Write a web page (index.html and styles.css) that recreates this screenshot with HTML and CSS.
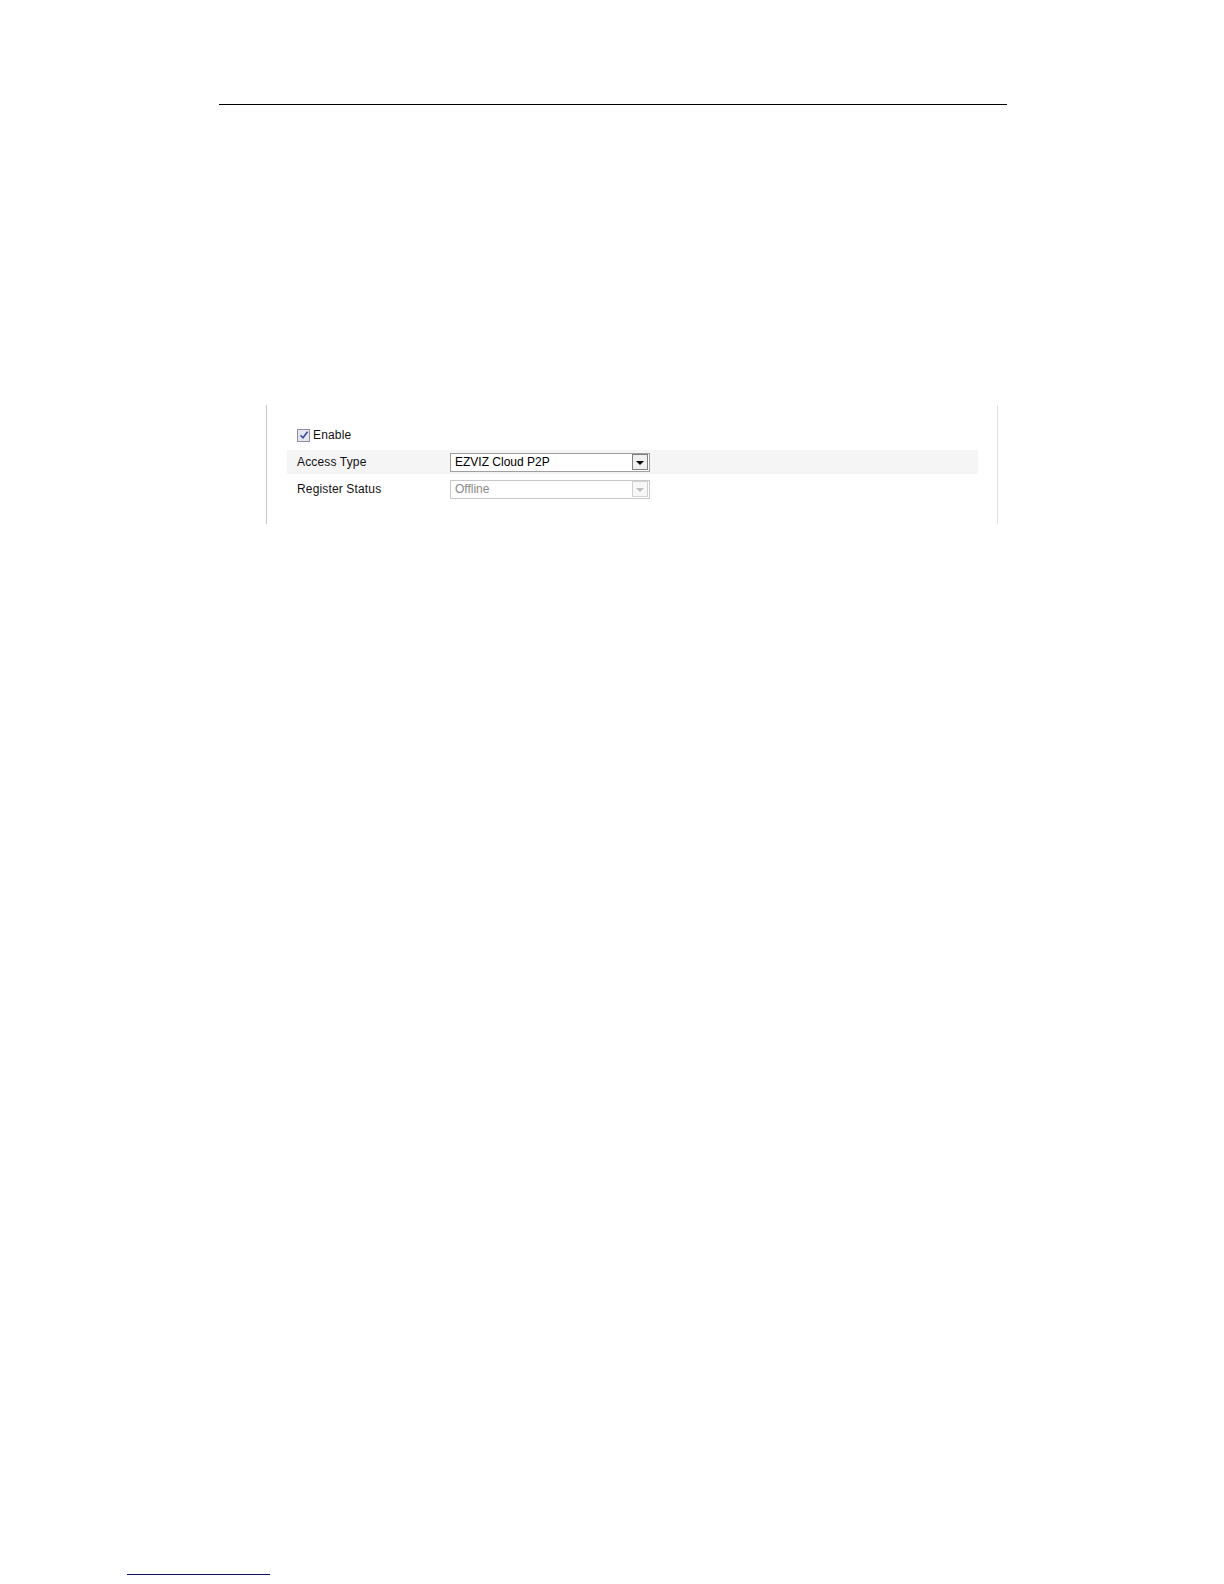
FILE: index.html
```html
<!DOCTYPE html>
<html>
<head>
<meta charset="utf-8">
<link rel="stylesheet" href="styles.css">
</head>
<body>
<div class="page">
  <div class="header-rule"></div>
  <div class="panel">
    <div class="row row-enable">
      <span class="checkbox">
        <svg width="10" height="10" viewBox="0 0 10 10"><path d="M1.5 5.2 L4 7.8 L8.6 1.8" fill="none" stroke="#3c46a8" stroke-width="1.6"/></svg>
      </span>
      <span class="label-inline">Enable</span>
    </div>
    <div class="row row-shaded">
      <span class="label">Access Type</span>
      <span class="select">
        <span class="select-text">EZVIZ Cloud P2P</span>
        <span class="select-btn"><span class="tri"></span></span>
      </span>
    </div>
    <div class="row">
      <span class="label">Register Status</span>
      <span class="select disabled">
        <span class="select-text">Offline</span>
        <span class="select-btn"><span class="tri"></span></span>
      </span>
    </div>
  </div>
  <div class="footer-rule"></div>
</div>
</body>
</html>
```
FILE: styles.css
```css
html, body {
  margin: 0;
  padding: 0;
  background: #ffffff;
}
.page {
  height: 1584px;
  display: flex;
  flex-direction: column;
  font-family: "Liberation Sans", Arial, sans-serif;
  font-size: 12px;
  color: #111;
}
.header-rule {
  margin-top: 104px;
  margin-left: 219px;
  width: 788px;
  height: 0;
  border-top: 1.5px solid #000;
}
.panel {
  margin-top: 300px;
  margin-left: 266px;
  width: 732px;
  height: 119px;
  border-left: 1px solid #c4c4c4;
  border-right: 1px solid #e2e2e2;
  padding: 18px 19px 0 20px;
  box-sizing: border-box;
}
.row {
  display: flex;
  align-items: center;
  height: 24px;
  padding-left: 10px;
  margin-bottom: 3px;
}
.row-enable {
  margin-bottom: 3px;
}
.row-shaded {
  background: #f5f5f5;
}
.label {
  width: 153px;
  letter-spacing: 0.15px;
}
.checkbox {
  width: 11px;
  height: 11px;
  border: 1px solid #8f8f9f;
  background: #e4e6ef;
  display: flex;
  align-items: center;
  justify-content: center;
  margin-right: 3px;
}
.label-inline {
  line-height: 14px;
  letter-spacing: 0.15px;
}
.select {
  width: 200px;
  height: 19px;
  box-sizing: border-box;
  border: 1px solid #a0a0a0;
  background: #fff;
  display: flex;
  align-items: center;
  justify-content: space-between;
  padding-left: 4px;
  padding-right: 1px;
}
.select-text {
  color: #000;
}
.select-btn {
  width: 14px;
  height: 14px;
  border: 1px solid #808080;
  background: #f0f0f0;
  display: flex;
  align-items: center;
  justify-content: center;
}
.tri {
  width: 0;
  height: 0;
  border-left: 4px solid transparent;
  border-right: 4px solid transparent;
  border-top: 4px solid #000;
  margin-top: 2px;
}
.select.disabled {
  border-color: #c8c8c8;
}
.select.disabled .select-text {
  color: #8a8a8a;
}
.select.disabled .select-btn {
  border-color: #d0d0d0;
  background: #f7f7f7;
}
.select.disabled .tri {
  border-top-color: #bdbdbd;
}
.footer-rule {
  margin-top: auto;
  margin-bottom: 9px;
  margin-left: 127px;
  width: 143px;
  height: 0;
  border-top: 1px solid #101070;
}
```
